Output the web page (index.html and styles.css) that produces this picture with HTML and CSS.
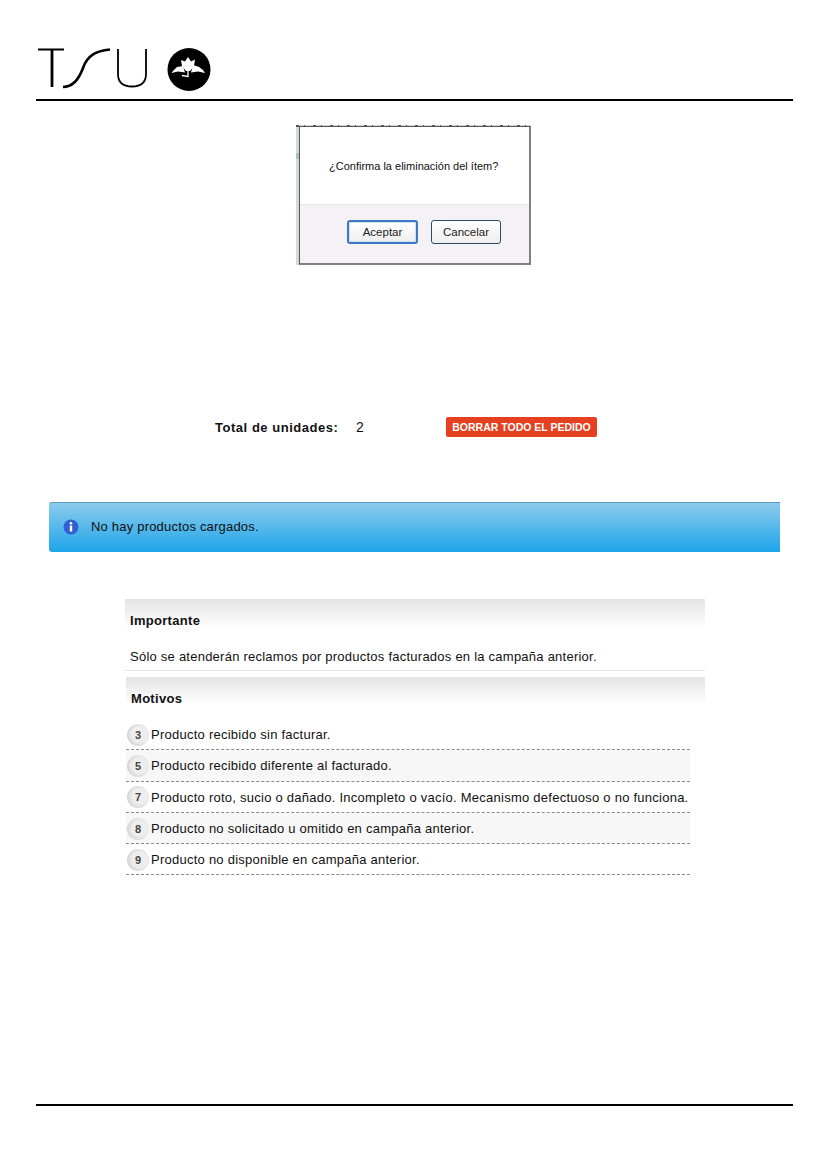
FILE: index.html
```html
<!DOCTYPE html>
<html lang="es">
<head>
<meta charset="utf-8">
<title>Reclamos</title>
<link rel="stylesheet" href="styles.css">
</head>
<body>
<div class="page">
  <header class="head">
    <svg class="logo" width="176" height="46" viewBox="0 0 176 46" aria-label="TSU">
      <g fill="none" stroke="#000">
        <path d="M0 3.5H26" stroke-width="2"/>
        <path d="M14 3.5V41" stroke-width="2.8"/>
        <path d="M25 41C35 41 41 33 45 22C49 10 57 5 72 3.5" stroke-width="2.6"/>
        <path d="M80 3V28C80 36 85 40.500 94 40.500C103 40.500 108 36 108 28V3" stroke-width="1.8"/>
      </g>
      <circle cx="151" cy="23.500" r="21.500" fill="#000"/>
      <g fill="#fff">
        <path d="M150 11L153 15.500L157 13.500L156 20L152 25H148L144 20L143 14L147 15.500Z"/>
        <path d="M145 20L139 21L135 25L133.500 27L140 25.500L147 26.500Z"/>
        <path d="M155 19L161 21L165 24L167 27L160 25.500L153 26.500Z"/>
      </g>
      <path d="M150 25V30.500L144 29.500" stroke="#fff" stroke-width="1.300" fill="none"/>
    </svg>
  </header>

  <div class="dialog">
    <div class="dialog-box">
      <div class="dialog-msg">¿Confirma la eliminación del ítem?</div>
      <div class="dialog-foot">
        <button class="dlg-btn dlg-btn-primary">Aceptar</button>
        <button class="dlg-btn">Cancelar</button>
      </div>
    </div>
  </div>

  <div class="total">
    <span class="total-label">Total de unidades:</span>
    <span class="total-num">2</span>
    <span class="danger">BORRAR TODO EL PEDIDO</span>
  </div>

  <div class="info">
    <svg class="info-icon" width="16" height="16" viewBox="0 0 16 16">
      <circle cx="8" cy="8" r="7.500" fill="#2f5fd0"/>
      <circle cx="8" cy="4.200" r="1.300" fill="#fff"/>
      <rect x="6.800" y="6.500" width="2.400" height="6" fill="#fff"/>
    </svg>
    <span>No hay productos cargados.</span>
  </div>

  <section class="panel">
    <h2 class="panel-head">Importante</h2>
    <p class="panel-note">Sólo se atenderán reclamos por productos facturados en la campaña anterior.</p>
    <h2 class="panel-head panel-head-second">Motivos</h2>
    <ul class="reasons">
      <li class="reason"><span class="badge">3</span>Producto recibido sin facturar.</li>
      <li class="reason reason-alt"><span class="badge">5</span>Producto recibido diferente al facturado.</li>
      <li class="reason"><span class="badge">7</span>Producto roto, sucio o dañado. Incompleto o vacío. Mecanismo defectuoso o no funciona.</li>
      <li class="reason reason-alt"><span class="badge">8</span>Producto no solicitado u omitido en campaña anterior.</li>
      <li class="reason"><span class="badge">9</span>Producto no disponible en campaña anterior.</li>
    </ul>
  </section>

  <footer class="foot"></footer>
</div>
</body>
</html>
```
FILE: styles.css
```css
* { box-sizing: border-box; }
html, body { margin: 0; padding: 0; background: #fff; }
body { font-family: "Liberation Sans", Arial, sans-serif; color: #111; }
.page {
  width: 827px;
  height: 1169px;
  padding: 0 34px 0 36px;
  display: flex;
  flex-direction: column;
  overflow: hidden;
}
.head {
  height: 101px;
  padding: 46px 0 0 2px;
  border-bottom: 2px solid #000;
  flex: none;
}
.logo { display: block; }

.dialog {
  flex: none;
  width: 235px;
  height: 140px;
  margin: 24px 0 0 260px;
  padding: 1px 0 0 3px;
  background:
    repeating-linear-gradient(90deg, #555 0 3px, transparent 3px 8px, #555 8px 9px, transparent 9px 17px) top left / 100% 2px no-repeat,
    linear-gradient(#d4d8d8 0 28px, #a8c4c0 28px 34px, #d4d8d8 34px);
}
.dialog-box {
  height: 100%;
  border-style: solid;
  border-color: #555 #808080 #808080 #555;
  border-width: 1px 2px 2px 1px;
  background: #fff;
  display: flex;
  flex-direction: column;
}
.dialog-msg {
  height: 78px;
  padding: 32px 0 0 29px;
  font-size: 11px;
  line-height: 14px;
  border-bottom: 1px solid #e6e6e6;
}
.dialog-foot {
  flex: 1;
  background: #f4f2f6;
  display: flex;
  gap: 13px;
  padding: 15px 0 0 47px;
}
.dlg-btn {
  width: 70px;
  height: 24px;
  padding: 0;
  border: 1px solid #2b4a66;
  border-radius: 3px;
  background: linear-gradient(#fff, #efeeee);
  font: 11.500px/20px "Liberation Sans", Arial, sans-serif;
  color: #222;
}
.dlg-btn-primary {
  width: 71px;
  border: 2px solid #3d79c0;
  box-shadow: inset 0 0 0 1px #cfe0f2;
}

.total {
  flex: none;
  display: flex;
  align-items: center;
  height: 20px;
  margin: 152px 0 0 179px;
}
.total-label { font-size: 13px; font-weight: bold; letter-spacing: .53px; width: 141px; }
.total-num { font-size: 14px; width: 90px; }
.danger {
  width: 151px;
  height: 20px;
  background: #e5401f;
  border-radius: 2px;
  color: #fff;
  font-size: 10.500px;
  font-weight: bold;
  line-height: 20px;
  text-align: center;
  white-space: nowrap;
}

.info {
  flex: none;
  width: 731px;
  height: 50px;
  margin: 65px 0 0 13px;
  padding: 0 0 2px 14px;
  display: flex;
  align-items: center;
  gap: 12px;
  border-top: 1px solid #5b9ac0;
  border-radius: 3px 0 0 3px;
  background: linear-gradient(#8ccbec, #1ea5ea);
  font-size: 13px;
  letter-spacing: .2px;
}

.panel { flex: none; width: 580px; margin: 47px 0 0 89px; }
.panel-head {
  height: 27px;
  margin: 0;
  padding: 14px 0 0 5px;
  font-size: 13px;
  line-height: 16px;
  letter-spacing: .3px;
  background: linear-gradient(#e4e4e4, #fdfdfd);
}
.panel-head-second { margin-left: 1px; padding-left: 5px; height: 26px; }
.panel-note {
  height: 45px;
  margin: 0 0 6px;
  padding: 23px 0 0 5px;
  font-size: 13px;
  line-height: 16px;
  letter-spacing: .24px;
  border-bottom: 1px solid #e6e6e6;
}
.reasons {
  list-style: none;
  width: 564px;
  margin: 16px 0 0 1px;
  padding: 0;
}
.reason {
  height: 31.300px;
  display: flex;
  align-items: center;
  gap: 2px;
  padding: 1px 0 0 1px;
  font-size: 13px;
  letter-spacing: .25px;
  white-space: nowrap;
  border-bottom: 1px dashed #8a8a8a;
}
.reason-alt { background: #f7f7f7; }
.badge {
  flex: none;
  width: 22px;
  height: 22px;
  border-radius: 50%;
  background: radial-gradient(circle at 58% 48%, #eeeeee 0 45%, #d2d2d2 75%, #c6c6c6);
  text-align: center;
  font-size: 11px;
  font-weight: bold;
  line-height: 22px;
  letter-spacing: 0;
  color: #444;
}
.foot {
  flex: none;
  margin-top: auto;
  margin-bottom: 63px;
  border-top: 2px solid #000;
}
```
